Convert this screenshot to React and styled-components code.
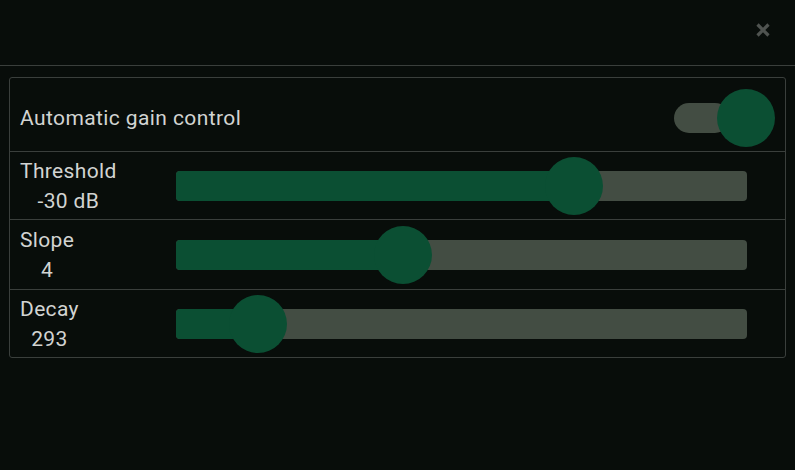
import React from 'react'
import styled, { createGlobalStyle } from 'styled-components'

const Global = createGlobalStyle`
  html, body {
    margin: 0;
    background: #080d0a;
    font-family: Roboto, 'Liberation Sans', sans-serif;
  }
`

const Header = styled.div`
  height: 66px;
  box-sizing: border-box;
  border-bottom: 1px solid #3a3f3c;
  display: flex;
  align-items: flex-start;
  justify-content: flex-end;
  padding: 23px 25px 0 0;
`

const Close = styled.button`
  background: none;
  border: none;
  padding: 0;
  width: 14px;
  height: 14px;
  cursor: pointer;
  display: flex;
`

const Card = styled.div`
  margin: 11px 9px 0;
  border: 1px solid #3a3f3c;
  border-radius: 3px;
`

const Row = styled.div`
  display: flex;
  align-items: center;
  height: ${p => p.$h}px;
  box-sizing: border-box;
  padding: ${p => (p.$first ? '6px 10px 0' : '0 10px')};
  border-top: ${p => (p.$first ? 'none' : '1px solid #3a3f3c')};
`

const Label = styled.div`
  color: #d2d4d2;
  font-size: 21px;
  letter-spacing: 0.4px;
  flex: 1;
`

const LabelCol = styled.div`
  width: 156px;
  flex-shrink: 0;
`

const Stack = styled.div`
  display: inline-flex;
  flex-direction: column;
  align-items: center;
  color: #d2d4d2;
  font-size: 21px;
  letter-spacing: 0.35px;
  line-height: 30px;
`

const Track = styled.div`
  position: relative;
  width: 571px;
  height: 30px;
  border-radius: 4px;
  background: #434d43;
`

const Fill = styled.div`
  height: 100%;
  border-radius: 4px 0 0 4px;
  background: #0b4f33;
`

const Thumb = styled.div`
  position: absolute;
  top: 50%;
  width: 58px;
  height: 58px;
  margin: -29px 0 0 -29px;
  border-radius: 50%;
  background: #0b4f33;
`

const Switch = styled.div`
  position: relative;
  width: 56px;
  height: 30px;
  margin-right: 45px;
  border-radius: 15px;
  background: #434d43;
`

const SwitchKnob = styled.div`
  position: absolute;
  left: 43px;
  top: -14px;
  width: 58px;
  height: 58px;
  border-radius: 50%;
  background: #0b4f33;
`

const sliders = [
  { name: 'Threshold', value: '-30 dB', pct: 0.697, h: 68 },
  { name: 'Slope', value: '4', pct: 0.397, h: 70 },
  { name: 'Decay', value: '293', pct: 0.144, h: 68 },
]

export default function App() {
  return (
    <>
      <Global />
      <Header>
        <Close aria-label="close">
          <svg width="14" height="14" viewBox="0 0 14 14">
            <path d="M1.5 1.5L12.5 12.5M12.5 1.5L1.5 12.5" stroke="#4f5350" strokeWidth="3.2" />
          </svg>
        </Close>
      </Header>
      <Card>
        <Row $first $h={73}>
          <Label>Automatic gain control</Label>
          <Switch>
            <SwitchKnob />
          </Switch>
        </Row>
        {sliders.map(s => (
          <Row key={s.name} $h={s.h}>
            <LabelCol>
              <Stack>
                <span>{s.name}</span>
                <span>{s.value}</span>
              </Stack>
            </LabelCol>
            <Track>
              <Fill style={{ width: `${s.pct * 100}%` }} />
              <Thumb style={{ left: `${s.pct * 100}%` }} />
            </Track>
          </Row>
        ))}
      </Card>
    </>
  )
}
